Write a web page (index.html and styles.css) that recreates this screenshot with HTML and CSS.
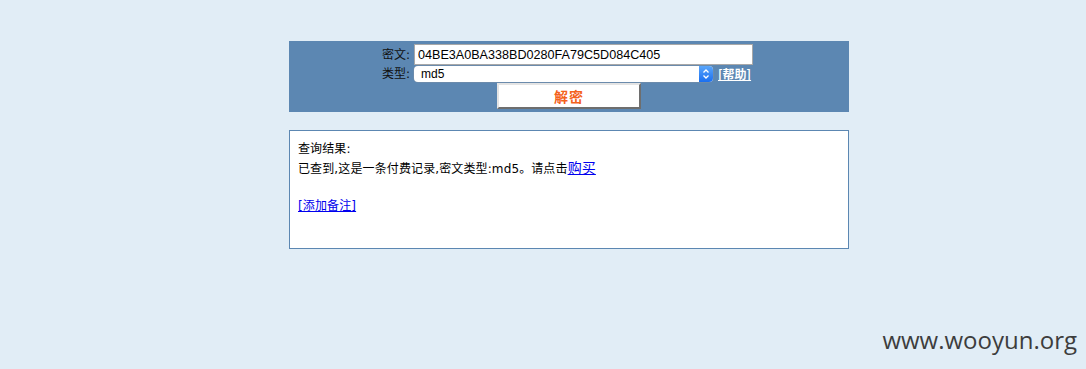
FILE: index.html
```html
<!DOCTYPE html>
<html lang="zh-CN">
<head>
    <meta charset="UTF-8">
    <title>md5解密</title>
    <link rel="stylesheet" href="styles.css">
</head>
<body>
<div class="wrap">
    <form class="panel">
        <div class="fields">
            <label class="lbl" for="hash">密文:</label>
            <input class="txt" id="hash" type="text" value="04BE3A0BA338BD0280FA79C5D084C405">
            <label class="lbl" for="type">类型:</label>
            <div class="typerow">
                <div class="sel">
                    <select id="type">
                        <option>md5</option>
                    </select>
                    <span class="arrows">
                        <svg width="8" height="12" viewBox="0 0 8 12">
                            <path d="M1.5 4.5 L4 2 L6.5 4.5 M1.5 7.5 L4 10 L6.5 7.5" fill="none" stroke="#fff" stroke-width="1.3"/>
                        </svg>
                    </span>
                </div>
                <a class="help" href="#">[帮助]</a>
            </div>
        </div>
        <div class="act">
            <button class="btn" type="button">解密</button>
        </div>
    </form>

    <div class="result">
        <p>查询结果:</p>
        <p>已查到,这是一条付费记录,密文类型:md5。请点击<a class="buy" href="#">购买</a></p>
        <p class="blank"></p>
        <p><a href="#">[添加备注]</a></p>
    </div>
</div>

<div class="mark">www.wooyun.org</div>
</body>
</html>
```

FILE: styles.css
```css
* {
    margin: 0;
    padding: 0;
    box-sizing: border-box;
}

body {
    background: #e1edf6;
    font-family: "Liberation Sans", "Noto Sans CJK SC", sans-serif;
    font-size: 12px;
    color: #000;
    height: 369px;
    overflow: hidden;
}

.wrap {
    width: 560px;
    margin-left: 289px;
    padding-top: 41px;
}

.panel {
    background: #5c87b2;
    padding: 3px 0 3px;
}

.fields {
    display: grid;
    grid-template-columns: 29px 339px;
    column-gap: 4px;
    row-gap: 1px;
    align-items: center;
    padding-left: 92px;
}

.lbl {
    text-align: right;
    white-space: nowrap;
    font-family: "DejaVu Sans", "Noto Sans CJK SC", sans-serif;
    font-size: 12px;
    color: #111;
    line-height: 16px;
}

.txt {
    height: 21px;
    width: 339px;
    border: 1px solid #a8a8a8;
    background: #fff;
    padding: 0 3px;
    font-family: "Liberation Sans", sans-serif;
    font-size: 12.6px;
    color: #000;
}

.typerow {
    display: flex;
    align-items: center;
    gap: 5px;
}

.sel {
    display: flex;
    width: 299px;
    height: 16px;
    background: #fff;
    border-radius: 4px;
    overflow: hidden;
    box-shadow: 0 0 0 0.5px #7a8fa5;
}

.sel select {
    flex: 1;
    appearance: none;
    -webkit-appearance: none;
    border: 0;
    background: transparent;
    padding-left: 7px;
    font-family: "Liberation Sans", sans-serif;
    font-size: 12px;
    line-height: 16px;
    color: #000;
    outline: none;
}

.arrows {
    width: 14px;
    display: flex;
    align-items: center;
    justify-content: center;
    background: linear-gradient(#5aa6fb, #1a6ff0);
}

.help {
    color: #fff;
    font-family: "Noto Sans CJK SC", sans-serif;
    font-size: 12px;
    font-weight: bold;
    line-height: 16px;
    text-decoration-skip-ink: none;
}

.act {
    display: flex;
    justify-content: center;
    padding-top: 1px;
}

.btn {
    width: 144px;
    height: 26px;
    background: #fff;
    border: 2px solid;
    border-color: #e4e4e4 #6e6e6e #6e6e6e #e4e4e4;
    color: #f4621c;
    font-family: "Noto Sans CJK SC", sans-serif;
    font-size: 14px;
    font-weight: bold;
    letter-spacing: 1px;
}

.result {
    margin-top: 18px;
    height: 119px;
    background: #fff;
    border: 1px solid #5c87b2;
    padding: 9px 8px 0;
    font-family: "DejaVu Sans", "Noto Sans CJK SC", sans-serif;
    font-size: 12px;
    line-height: 19px;
    letter-spacing: 0.12px;
}

.result p {
    height: 19px;
}

.result a {
    color: #0000ee;
    text-decoration-skip-ink: none;
}

.result .buy {
    font-size: 14px;
}

.mark {
    position: absolute;
    right: 9px;
    bottom: 13px;
    font-family: "Open Sans", "Noto Sans", sans-serif;
    font-size: 24px;
    color: #3d3d3d;
}
```
